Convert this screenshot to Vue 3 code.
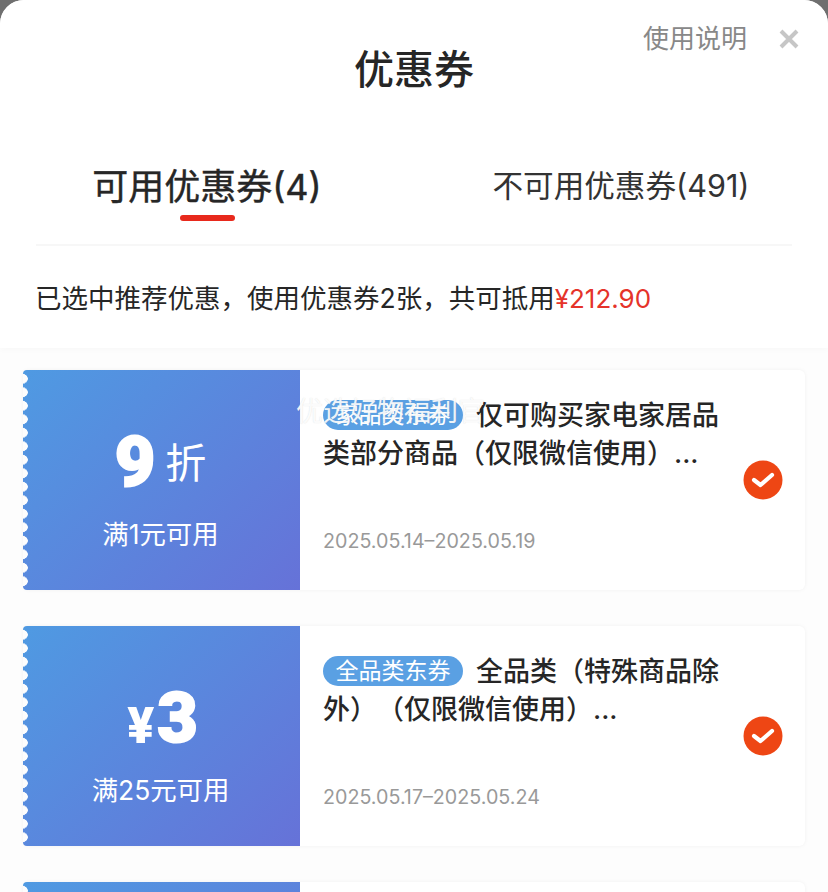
<script setup>
const coupons = [
  {
    id: 1,
    discount: '9',
    unit: '折',
    limit: '满1元可用',
    tag: '家品类东券',
    title: '仅可购买家电家居品类部分商品（仅限微信使用）...',
    date: '2025.05.14–2025.05.19'
  },
  {
    id: 2,
    currency: '¥',
    discount: '3',
    limit: '满25元可用',
    tag: '全品类东券',
    title: '全品类（特殊商品除外）（仅限微信使用）...',
    date: '2025.05.17–2025.05.24'
  },
  { id: 3 }
]
</script>

<template>
  <div class="page">
    <header class="sheet-head">
      <div class="title-row">
        <h1>优惠券</h1>
        <div class="head-actions">
          <span class="help">使用说明</span>
          <svg class="close" width="20" height="20" viewBox="0 0 20 20">
            <path d="M2 2 18 18M18 2 2 18" stroke="#c6c6c6" stroke-width="4" fill="none" />
          </svg>
        </div>
      </div>

      <div class="tabs">
        <div class="tab active">可用优惠券(4)</div>
        <div class="tab">不可用优惠券(491)</div>
      </div>

      <p class="summary">已选中推荐优惠，使用优惠券2张，共可抵用<span class="amount">¥212.90</span></p>
    </header>

    <section class="coupon-list">
      <article v-for="coupon in coupons" :key="coupon.id" class="coupon">
        <div class="coupon-left">
          <div v-if="coupon.discount" class="value">
            <span v-if="coupon.currency" class="currency">{{ coupon.currency }}</span>
            <span class="number">{{ coupon.discount }}</span>
            <span v-if="coupon.unit" class="unit">{{ coupon.unit }}</span>
          </div>
          <div class="limit">{{ coupon.limit }}</div>
        </div>
        <div class="coupon-right">
          <div v-if="coupon.title" class="coupon-text">
            <p class="coupon-title"><span class="tag">{{ coupon.tag }}</span>{{ coupon.title }}</p>
            <p class="coupon-date">{{ coupon.date }}</p>
          </div>
          <svg v-if="coupon.title" class="check" width="40" height="40" viewBox="0 0 40 40">
            <circle cx="20" cy="20" r="19.5" fill="#ee4614" />
            <path d="M11 20 17.5 25 29 15" fill="none" stroke="#fff" stroke-width="4.2" stroke-linecap="round" stroke-linejoin="round" />
          </svg>
        </div>
      </article>
    </section>

    <div class="watermark">优选好物福利官</div>
  </div>
</template>

<style scoped>
.page {
  position: relative;
  height: 892px;
  overflow: hidden;
  background: #fdfdfd;
  border-radius: 24px 24px 0 0;
  font-family: "Inter", "Noto Sans CJK SC", sans-serif;
  color: #262626;
  text-spacing-trim: space-all;
}

.sheet-head {
  background: #fff;
  padding: 0 36px;
  height: 348px;
  box-sizing: border-box;
  box-shadow: 0 2px 6px rgba(0, 0, 0, 0.025);
}

.title-row {
  position: relative;
  height: 142px;
  text-align: center;
}

.title-row h1 {
  margin: 0;
  padding-top: 42px;
  font-size: 40px;
  line-height: 56px;
  font-weight: 500;
}

.head-actions {
  position: absolute;
  top: 20px;
  right: -7px;
  display: flex;
  align-items: center;
  gap: 32px;
}

.help {
  font-size: 26px;
  line-height: 38px;
  color: #888;
}

.tabs {
  display: grid;
  grid-template-columns: 1fr 1fr;
  height: 104px;
  margin: 0 -36px;
  position: relative;
}

.tabs::after {
  content: "";
  position: absolute;
  left: 36px;
  right: 36px;
  bottom: 0;
  height: 2px;
  background: #f7f7f7;
}

.tab {
  position: relative;
  font-size: 30.6px;
  line-height: 44px;
  padding-top: 22px;
  text-align: center;
  color: #333;
}

.tab.active {
  padding-top: 23px;
  font-size: 36px;
  color: #262626;
  -webkit-text-stroke: 0.4px #262626;
}

.tab.active::after {
  content: "";
  position: absolute;
  left: 180px;
  top: 73px;
  width: 55px;
  height: 6px;
  border-radius: 3px;
  background: #e8291c;
}

.summary {
  margin: 0 0 0 -1px;
  padding-top: 33px;
  font-size: 26.5px;
  line-height: 38px;
}

.amount {
  color: #e5332a;
  font-size: 26px;
}

.coupon-list {
  display: grid;
  gap: 36px;
  padding: 22px 23px 0;
}

.coupon {
  display: grid;
  grid-template-columns: 277px 1fr;
  height: 220px;
  background: #fff;
  border-radius: 6px;
  box-shadow: 0 0 4px rgba(0, 0, 0, 0.05);
}

.coupon-left {
  position: relative;
  display: flex;
  flex-direction: column;
  align-items: center;
  padding-top: 56px;
  box-sizing: border-box;
  border-radius: 4px 0 0 4px;
  color: #fff;
  background: linear-gradient(135deg, #4f9ae2, #6672d8);
}

.coupon-left::before {
  content: "";
  position: absolute;
  left: 0;
  top: 0;
  bottom: 0;
  width: 5px;
  background: radial-gradient(circle at 0 50%, #fdfdfd 4.5px, transparent 5px) 0 2px / 5px 13.5px repeat-y;
}

.value {
  display: flex;
  align-items: center;
  height: 72px;
  line-height: 72px;
}

.number {
  font-family: "Roboto", "Liberation Sans", sans-serif;
  font-size: 70px;
  font-weight: 900;
  -webkit-text-stroke: 2px #fff;
}

.currency {
  font-family: "Roboto", "Liberation Sans", sans-serif;
  font-size: 50px;
  font-weight: 900;
  margin-top: 16px;
  margin-right: 3px;
  margin-left: 2px;
}

.unit {
  font-size: 41px;
  margin-left: 10px;
  margin-right: 2px;
  margin-top: 1px;
}

.limit {
  margin-top: 17px;
  margin-left: -2px;
  font-size: 26.4px;
  line-height: 38px;
}

.coupon-right {
  display: flex;
  align-items: center;
  justify-content: space-between;
  padding: 0 22px 0 23px;
}

.coupon-text {
  align-self: stretch;
  width: 400px;
  padding-top: 27px;
  box-sizing: border-box;
}

.coupon-title {
  margin: 0;
  height: 129px;
  font-size: 27px;
  line-height: 38px;
  font-weight: 500;
}

.tag {
  display: inline-block;
  width: 140px;
  height: 30px;
  margin-right: 13px;
  border-radius: 15px;
  background: #5aa0e3;
  color: #fff;
  font-size: 23px;
  line-height: 30px;
  font-weight: 400;
  text-align: center;
  vertical-align: 2px;
}

.coupon-date {
  margin: 0;
  font-size: 19.7px;
  line-height: 30px;
  color: #999;
}

.check {
  flex: none;
}

.watermark {
  position: absolute;
  left: 296px;
  top: 392px;
  font-size: 27px;
  line-height: 40px;
  color: rgba(255, 255, 255, 0.9);
  text-shadow: 0 0 1px rgba(170, 170, 170, 0.4);
  white-space: nowrap;
}
</style>

<style>
html,
body {
  background: #6f6f6f;
}
</style>
